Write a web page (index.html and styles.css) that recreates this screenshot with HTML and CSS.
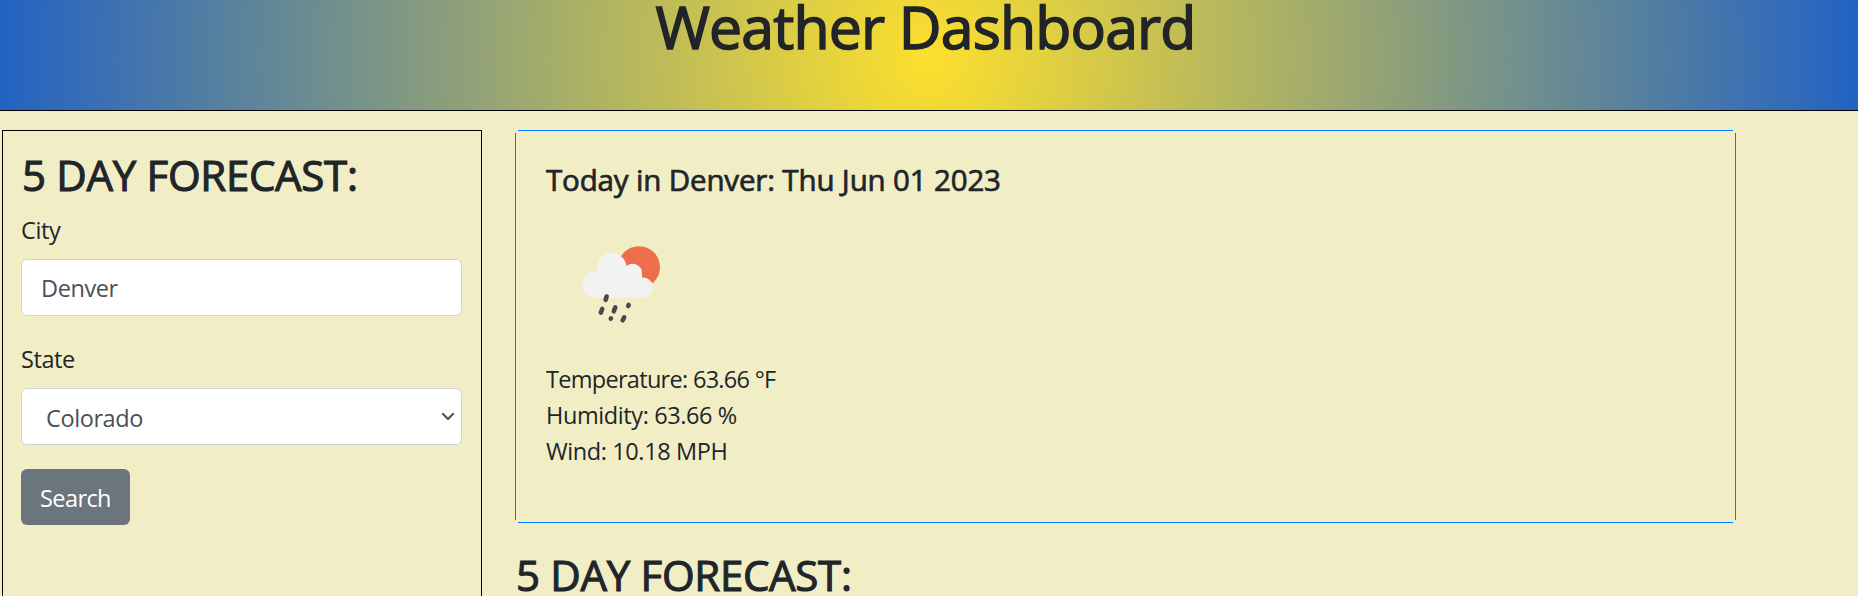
FILE: index.html
```html
<!DOCTYPE html>
<html lang="en">
<head>
<meta charset="utf-8">
<title>Weather Dashboard</title>
<link rel="stylesheet" href="styles.css">
</head>
<body>
<header class="banner"><h1 class="banner-title">Weather Dashboard</h1></header>
<main class="layout">
  <aside class="search-panel">
    <h2 class="heading">5 DAY FORECAST:</h2>
    <form>
      <label class="label" for="city">City</label>
      <input class="control" id="city" type="text" value="Denver">
      <label class="label label-next" for="state">State</label>
      <div class="select-wrap">
        <select class="control control-select" id="state"><option>Colorado</option></select>
        <svg class="chevron" viewBox="0 0 14 9"><path d="M1.3 1.3 7 7l5.7-5.7"/></svg>
      </div>
      <button class="search-button" type="button">Search</button>
    </form>
  </aside>
  <section class="results">
    <article class="today-card">
      <h3 class="today-title">Today in Denver: Thu Jun 01 2023</h3>
      <svg class="weather-icon" viewBox="0 0 150 150">
        <circle cx="93" cy="57.2" r="21" fill="#ed6e4b"/>
        <path d="M66 43a15 15 0 0 1 14.500 13a9.500 9.500 0 0 1 15.500 8.500v3a10.300 10.300 0 0 1 2 20.500H49.700a13.700 13.700 0 0 1 1.600-27A14.700 14.700 0 0 1 66 43Z" fill="#f2f2f2"/>
        <rect x="36" y="61" width="30" height="27" rx="13.500" fill="#f2f2f2"/>
        <g class="drops"><path d="M60.600 86.500l-1 3.400M56.200 99l-1.400 3.600M69.300 97.300l-1.500 4M82.700 95l-.5 1M65 108.400l-.3.3M78.200 107.300l-1.500 3"/></g>
      </svg>
      <p class="reading reading-temperature">Temperature: 63.66 °F</p>
      <p class="reading">Humidity: 63.66 %</p>
      <p class="reading">Wind: 10.18 MPH</p>
    </article>
    <h2 class="heading">5 DAY FORECAST:</h2>
  </section>
</main>
</body>
</html>
```
FILE: styles.css
```css
* { box-sizing: border-box; }
html { overflow: hidden; }
body {
  margin: 0;
  height: 596px;
  overflow: hidden;
  background: #f1eec6;
  color: #212529;
  font-family: "Open Sans", "Noto Sans", sans-serif;
  font-size: 23.5px;
  line-height: 36px;
  letter-spacing: -0.4px;
}
h1, h2, h3, p { margin: 0; }
.banner {
  height: 111px;
  padding-right: 7px;
  border-bottom: 1px solid #000;
  background: radial-gradient(circle at 50% 58px, #fde02d 0%, #2262c3 100%);
  text-align: center;
}
.banner-title {
  font-size: 59px;
  line-height: 52px;
  font-weight: 400;
  letter-spacing: -0.85px;
  -webkit-text-stroke: 1.5px #212529;
}
.layout { display: flex; gap: 33px; padding: 19px 122px 0 2px; align-items: flex-start; }
.search-panel { width: 480px; height: 466px; padding: 19px 19px 0 18px; border: 1px solid #000; border-bottom: 0; }
.heading {
  font-size: 42px;
  line-height: 50px;
  font-weight: 400;
  letter-spacing: -0.3px;
  -webkit-text-stroke: 1.1px #212529;
  padding-left: 1px;
  height: 50px;
}
.results .heading { height: 46px; }
.label { display: block; margin: 12px 0 11px; }
.label-next { margin-top: 25px; }
.control {
  display: block;
  width: 441px;
  height: 57px;
  padding: 0 19px;
  border: 1px solid #ced4da;
  border-radius: 6px;
  background: #fff;
  color: #495057;
  font: inherit;
  letter-spacing: inherit;
}
.select-wrap { position: relative; }
.control-select { appearance: none; padding: 2px 24px 0; }
.chevron { position: absolute; right: 7px; top: 24px; width: 14px; height: 9px; fill: none; stroke: #495057; stroke-width: 2; }
.search-button {
  display: block;
  width: 109px;
  height: 56px;
  margin-top: 24px;
  padding: 1px 0 0;
  border: 0;
  border-radius: 6px;
  background: #6c757d;
  color: #fff;
  font: inherit;
  letter-spacing: -0.6px;
}
.results { flex: 1; }
.today-card {
  height: 393px;
  margin-bottom: 27px;
  padding: 32px 31px 0;
  background:
    linear-gradient(#007bff, #007bff) 50% 0 / calc(100% - 6px) 1px,
    linear-gradient(#007bff, #007bff) 50% 100% / calc(100% - 6px) 1px,
    linear-gradient(#007bff, #007bff) 0 50% / 1px calc(100% - 6px),
    linear-gradient(#007bff, #007bff) 100% 50% / 1px calc(100% - 6px);
  background-repeat: no-repeat;
}
.today-title {
  font-size: 29.5px;
  line-height: 36px;
  font-weight: 400;
  letter-spacing: -0.15px;
  -webkit-text-stroke: 0.7px #212529;
}
.weather-icon { display: block; width: 150px; height: 150px; margin: 12px 0 1px; }
.reading-temperature { letter-spacing: -0.7px; }
.drops { fill: none; stroke: #49494b; stroke-width: 4.6; stroke-linecap: round; }
```
